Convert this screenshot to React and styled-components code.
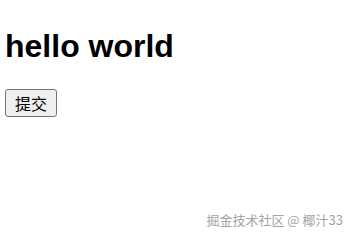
import React from 'react';
import styled, { createGlobalStyle } from 'styled-components';

const GlobalStyle = createGlobalStyle`
  html, body {
    margin: 0;
    padding: 0;
    background: #ffffff;
  }
  body {
    width: 350px;
    height: 236px;
    overflow: hidden;
  }
`;

const Page = styled.div`
  position: relative;
  width: 350px;
  height: 236px;
  box-sizing: border-box;
  padding: 28px 0 0 5px;
  display: flex;
  flex-direction: column;
  align-items: flex-start;
`;

const Title = styled.h1`
  margin: 0 0 0 0;
  font-family: "Liberation Sans", "Noto Sans CJK SC", sans-serif;
  font-size: 32px;
  font-weight: bold;
  line-height: 36px;
  color: #000;
`;

const SubmitButton = styled.button`
  margin-top: 25px;
  width: 52px;
  height: 28px;
  padding: 0;
  font-family: "Noto Sans CJK SC", sans-serif;
  font-size: 16px;
  line-height: 1;
  color: #000;
  background: #efefef;
  border: 1px solid #767676;
  border-radius: 3px;
`;

const Watermark = styled.div`
  position: absolute;
  right: 7px;
  bottom: 8px;
  font-family: "Noto Sans CJK SC", sans-serif;
  font-size: 13px;
  line-height: 16px;
  color: #a3a3a3;
  white-space: nowrap;
`;

export default function App() {
  return (
    <>
      <GlobalStyle />
      <Page>
        <Title>hello world</Title>
        <SubmitButton>提交</SubmitButton>
        <Watermark>掘金技术社区 @ 椰汁33</Watermark>
      </Page>
    </>
  );
}
